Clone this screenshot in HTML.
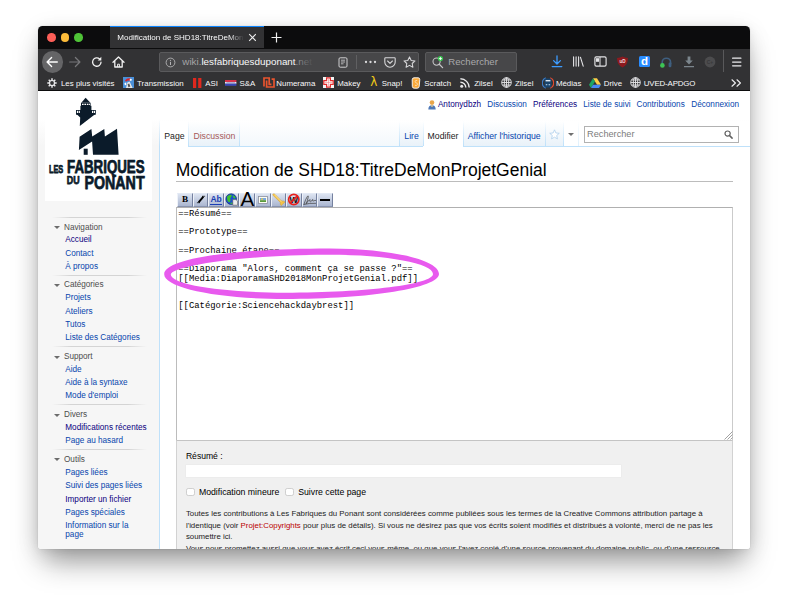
<!DOCTYPE html>
<html lang="fr"><head><meta charset="utf-8"><title>Modification de SHD18:TitreDeMonProjetGenial</title>
<style>
*{box-sizing:border-box;margin:0;padding:0}
html,body{width:788px;height:600px;overflow:hidden;background:#fff;font-family:"Liberation Sans",sans-serif;}
#shadow{position:absolute;left:38.3px;top:26px;width:711.4px;height:523.3px;border-radius:5px 5px 4px 4px;box-shadow:0 18px 28px -6px rgba(0,0,0,.39),0 4px 24px rgba(0,0,0,.09),0 1px 10px rgba(0,0,0,.06),0 0 1px rgba(0,0,0,.28);}
#win{position:absolute;left:38.3px;top:26px;width:711.4px;height:523.3px;border-radius:4.5px 4.5px 3.5px 3.5px;overflow:hidden;background:#fff;}
#tabbar{position:absolute;left:0;top:0;width:712px;height:22.5px;z-index:2;background:#0c0c0d;}
.tl{position:absolute;top:7px;width:8.7px;height:8.7px;border-radius:50%;}
#tab{position:absolute;left:72px;top:0;width:154px;height:22px;background:#323234;border-top:1.5px solid #0a84ff;color:#f9f9fa;font-size:8.05px;line-height:21px;padding-left:7px;white-space:nowrap;overflow:hidden}
#navbar{position:absolute;left:0;top:22px;width:712px;height:26px;background:#323234;}
#bmbar{position:absolute;left:0;top:48px;width:712px;height:17px;background:#323234;border-bottom:1px solid #0c0c0d;color:#f9f9fa;font-size:7.9px;line-height:17px;white-space:nowrap}
.bm{position:absolute;top:1px}
.abs{position:absolute}
#urlbar{position:absolute;left:121px;top:4px;width:260px;height:20px;background:#474749;border:1px solid #5a5a5c;border-radius:2px}
#searchbar{position:absolute;left:387px;top:4px;width:92px;height:20px;background:#474749;border:1px solid #5a5a5c;border-radius:2px}
#page{position:absolute;left:0;top:65px;width:712px;height:460px;background:#f6f6f6;overflow:hidden}
#pagebase{position:absolute;left:0;top:0;width:712px;height:55px;background:linear-gradient(#fff 50%,#f6f6f6 100%)}
#content{position:absolute;left:121px;top:55px;width:600px;height:420px;background:#fff;border:1px solid #bfe1fa;}
a{text-decoration:none;color:#0645ad}
a.v{color:#0b0080}
#ptools{position:absolute;top:7.5px;left:0;width:712px;font-size:8.18px;line-height:12px;white-space:nowrap}
#ptools a{position:absolute;top:0}
.tabs{position:absolute;top:31px;height:25px;font-size:8.7px;white-space:nowrap}
.tab{position:absolute;top:0;height:25px;line-height:12px;padding-top:10px;text-align:center;background:linear-gradient(#fff 0%,#e8f2f8 100%);border-left:1px solid #bfe1fa;color:#0645ad}
.tab.sel{background:#fff;color:#222;height:26px}
.tab.last{border-right:1px solid #bfe1fa}
h1{position:absolute;left:137.5px;top:65.7px;width:557.5px;height:25px;font-weight:normal;font-size:17.5px;line-height:26.4px;color:#000;border-bottom:1px solid #bcbcbc;white-space:nowrap}
.ph{position:absolute;left:25.7px;font-size:8.18px;color:#4d4d4d;line-height:10px}
.ph:before{content:"";position:absolute;left:-10.2px;top:3.8px;border:3.3px solid transparent;border-top:3.7px solid #6c6c6c;border-bottom:0;width:0;height:0}
.pl{position:absolute;left:27px;font-size:8.18px;line-height:9.2px;white-space:nowrap}
.sep{position:absolute;left:14px;width:95px;height:1px;background:linear-gradient(90deg,rgba(200,200,200,0),#d4d4d4 20%,#d4d4d4 80%,rgba(200,200,200,0))}
#ta{position:absolute;left:138px;top:116px;width:556.8px;height:234px;border:1px solid #cbcbcb;border-top-color:#b0b0b0;border-left-color:#bcbcbc;border-bottom-color:#c4c4c4;background:#fff;font-family:"Liberation Mono",monospace;font-size:8.88px;line-height:9.25px;color:#000;white-space:pre;padding:1.8px 1px;overflow:hidden}
#opts{position:absolute;left:138px;top:349px;width:556.4px;height:120px;background:#f0f0f0;border:1px solid #d2d2d2;border-top-color:#c4c4c4;}
#opts .t{position:absolute;white-space:nowrap;color:#000}
.cb{position:absolute;width:8.6px;height:8.4px;border:1px solid #cfcfcf;border-radius:2.2px;background:#fff}
.vsep{top:30px;width:1px;height:25px;background:linear-gradient(rgba(191,225,250,0),#bfe1fa)}
.tt{top:38.5px;font-size:8.7px;line-height:12px;color:#0645ad;white-space:nowrap}
#tb{position:absolute;left:139px;top:101.6px;width:156px;height:14.6px}
#tb .b{position:absolute;top:0;width:15.55px;height:14.6px;border:1px solid;border-color:#e3e9f4 #75819f #8792ae #eef2f9;background:linear-gradient(#dde4f1,#aab6d0);display:flex;align-items:center;justify-content:center;overflow:visible}
</style></head><body>
<div id="shadow"></div>
<div id="win">
 <div id="tabbar">
  <div class="tl" style="left:8.7px;background:#fd5f58"></div>
  <div class="tl" style="left:22.4px;background:#fdbc3a"></div>
  <div class="tl" style="left:36.1px;background:#4fc337"></div>
  <div id="tab"><div style="width:127px;overflow:hidden;-webkit-mask-image:linear-gradient(90deg,#000 88%,transparent);mask-image:linear-gradient(90deg,#000 88%,transparent)">Modification de SHD18:TitreDeMonProjetGenial</div></div>
  <svg class="abs" style="left:210px;top:7px" width="9" height="9" viewBox="0 0 9 9"><path d="M1.2 1.2L7.8 7.8M7.8 1.2L1.2 7.8" stroke="#f0f0f0" stroke-width="1.1" fill="none"/></svg>
  <svg class="abs" style="left:233px;top:6px" width="11" height="11" viewBox="0 0 11 11"><path d="M5.5 0.5V10.5M0.5 5.5H10.5" stroke="#f0f0f0" stroke-width="1.2" fill="none"/></svg>
 </div>
 <div id="navbar"><!--NAV0-->
  <div class="abs" style="left:3.3px;top:3.4px;width:21.6px;height:21.6px;border-radius:50%;background:#656567"></div>
  <svg class="abs" style="left:8px;top:8px" width="12" height="12" viewBox="0 0 12 12"><path d="M11.3 6H1.3M5.6 1.5L1.1 6L5.6 10.5" stroke="#fff" stroke-width="1.35" fill="none" stroke-linecap="round" stroke-linejoin="round"/></svg>
  <svg class="abs" style="left:30.5px;top:8px" width="12" height="12" viewBox="0 0 12 12"><path d="M0.7 6H10.7M6.4 1.5L10.9 6L6.4 10.5" stroke="#77777a" stroke-width="1.2" fill="none" stroke-linecap="round" stroke-linejoin="round"/></svg>
  <svg class="abs" style="left:53px;top:8px" width="12" height="12" viewBox="0 0 12 12"><path d="M10 6.2A4.2 4.2 0 1 1 8.6 2.9" stroke="#f0f0f0" stroke-width="1.3" fill="none" stroke-linecap="round"/><path d="M10.3 0.8V4.4H6.7Z" fill="#f0f0f0"/></svg>
  <svg class="abs" style="left:74px;top:8px" width="13" height="12" viewBox="0 0 13 12"><path d="M1 6.3L6.5 1L12 6.3M2.8 5.2V11H10.2V5.2" stroke="#f0f0f0" stroke-width="1.3" fill="none" stroke-linejoin="round" stroke-linecap="round"/><path d="M5.6 11V8.2H7.4V11" stroke="#f0f0f0" stroke-width="1" fill="none"/></svg>
  <div id="urlbar">
   <svg class="abs" style="left:5px;top:3.5px" width="11" height="11" viewBox="0 0 11 11"><circle cx="5.5" cy="5.5" r="4.4" stroke="#b4b4b6" stroke-width="0.9" fill="none"/><path d="M5.5 4.8V8" stroke="#b4b4b6" stroke-width="1"/><circle cx="5.5" cy="3.3" r="0.65" fill="#b4b4b6"/></svg>
   <div class="abs" style="left:22px;top:0;height:18px;line-height:18px;font-size:9.85px;color:#a4a4a6;white-space:nowrap">wiki.<span style="color:#f9f9fa">lesfabriquesduponant</span>.net</div>
   <div class="abs" style="left:134px;top:1px;width:22px;height:16px;background:linear-gradient(90deg,rgba(71,71,73,0),#474749 90%)"></div>
   <svg class="abs" style="left:178px;top:4px" width="10" height="11" viewBox="0 0 10 11"><rect x="1" y="0.8" width="8" height="9.4" rx="1.2" stroke="#d0d0d2" stroke-width="1" fill="none"/><path d="M3 3.2H7M3 5H7M3 6.8H5.5" stroke="#d0d0d2" stroke-width="0.8"/></svg>
   <div class="abs" style="left:196px;top:2px;width:1px;height:14px;background:#606062"></div>
   <svg class="abs" style="left:204px;top:7px" width="13" height="4" viewBox="0 0 13 4"><circle cx="2" cy="2" r="1.15" fill="#d8d8da"/><circle cx="6.5" cy="2" r="1.15" fill="#d8d8da"/><circle cx="11" cy="2" r="1.15" fill="#d8d8da"/></svg>
   <svg class="abs" style="left:224px;top:4px" width="12" height="11" viewBox="0 0 12 11"><path d="M1.6 0.8H10.4Q11.2 0.8 11.2 1.6V5A5.2 5.2 0 0 1 0.8 5V1.6Q0.8 0.8 1.6 0.8Z" stroke="#d8d8da" stroke-width="1.1" fill="none"/><path d="M3.6 4L6 6.3L8.4 4" stroke="#d8d8da" stroke-width="1.1" fill="none" stroke-linecap="round" stroke-linejoin="round"/></svg>
   <svg class="abs" style="left:243px;top:3px" width="13" height="12" viewBox="0 0 13 12"><path d="M6.5 0.9L8.2 4.4L12 4.9L9.2 7.5L9.9 11.2L6.5 9.4L3.1 11.2L3.8 7.5L1 4.9L4.8 4.4Z" stroke="#d8d8da" stroke-width="1.05" fill="none" stroke-linejoin="round"/></svg>
  </div>
  <div id="searchbar">
   <svg class="abs" style="left:5px;top:2px" width="14" height="14" viewBox="0 0 14 14"><circle cx="5.6" cy="6.6" r="3.6" stroke="#c4c4c6" stroke-width="1.1" fill="none"/><path d="M8.3 9.3L11.6 12.6" stroke="#c4c4c6" stroke-width="1.3" stroke-linecap="round"/><circle cx="9.4" cy="3.6" r="2.6" fill="#38c750"/><path d="M9.4 2.1V5.1M7.9 3.6H10.9" stroke="#fff" stroke-width="0.9"/></svg>
   <div class="abs" style="left:22px;top:0;height:18px;line-height:18px;font-size:9.6px;color:#a9a9ab;white-space:nowrap">Rechercher</div>
  </div>
  <svg class="abs" style="left:513px;top:7px" width="12" height="13" viewBox="0 0 12 13"><path d="M6 0.8V8.6M2.6 5.6L6 9L9.4 5.6" stroke="#3d9bfd" stroke-width="1.3" fill="none" stroke-linecap="round" stroke-linejoin="round"/><path d="M1.2 11.6H10.8" stroke="#3d9bfd" stroke-width="1.3" stroke-linecap="round"/></svg>
  <svg class="abs" style="left:534px;top:8px" width="13" height="11" viewBox="0 0 13 11"><path d="M1.6 0.9V10.1M4.1 0.9V10.1M6.6 0.9V10.1M8.5 1.3L11.2 10.1" stroke="#e4e4e6" stroke-width="1.1" fill="none" stroke-linecap="round"/></svg>
  <svg class="abs" style="left:556px;top:8px" width="13" height="11" viewBox="0 0 13 11"><rect x="0.9" y="0.9" width="11.2" height="9.2" rx="1.4" stroke="#e4e4e6" stroke-width="1.15" fill="none"/><path d="M6 1V10" stroke="#e4e4e6" stroke-width="1"/><rect x="2" y="2.2" width="3" height="3.6" fill="#e4e4e6"/></svg>
  <svg class="abs" style="left:578px;top:7.5px" width="13" height="12" viewBox="0 0 13 12"><path d="M6.5 0.6Q9 2 12 2Q12.2 8.6 6.5 11.6Q0.8 8.6 1 2Q4 2 6.5 0.6Z" fill="#8c1a1f"/><text x="6.5" y="7.3" font-family="Liberation Sans, sans-serif" font-size="4.6" font-weight="bold" fill="#f4dcdc" text-anchor="middle">uD</text></svg>
  <svg class="abs" style="left:600.5px;top:8px" width="11" height="11" viewBox="0 0 11 11"><rect width="11" height="11" rx="1.5" fill="#2a8cff"/><text x="5.4" y="9.2" font-family="Liberation Sans, sans-serif" font-weight="bold" font-size="11.5" fill="#fff" text-anchor="middle">d</text></svg>
  <svg class="abs" style="left:621px;top:7px" width="14" height="14" viewBox="0 0 14 14"><path d="M3.2 9.6V7.4A4.2 4.2 0 0 1 11.6 7.4V9.2" stroke="#3f5f80" stroke-width="1.6" fill="none"/><rect x="9.6" y="7.6" width="2.8" height="4.6" rx="1.2" fill="#3f5f80"/><circle cx="3.4" cy="10.4" r="2.3" fill="#3dc454"/></svg>
  <svg class="abs" style="left:644.5px;top:8px" width="12" height="12" viewBox="0 0 12 12"><path d="M4.6 0.6H7.4V4.4H9.8L6 8.4L2.2 4.4H4.6Z" fill="#7b858c"/><path d="M1 10.6H11" stroke="#7b858c" stroke-width="1.2"/></svg>
  <svg class="abs" style="left:666px;top:8px" width="12" height="12" viewBox="0 0 12 12"><circle cx="6" cy="6" r="5.4" fill="#4c4c4e"/><text x="6" y="7.8" font-family="Liberation Sans, sans-serif" font-size="5" font-weight="bold" fill="#39393b" text-anchor="middle">C+</text></svg>
  <div class="abs" style="left:685px;top:2px;width:1px;height:22px;background:#59595b"></div>
  <svg class="abs" style="left:693px;top:9px" width="11" height="10" viewBox="0 0 11 10"><path d="M1.6 1.2H9.9M1.6 5H9.9M1.6 8.8H9.9" stroke="#ececee" stroke-width="1.25" stroke-linecap="round"/></svg>
<!--NAV1--></div>
 <div id="bmbar"><!--BM0-->
  <svg class="abs" style="left:9px;top:3.5px" width="10" height="10" viewBox="0 0 10 10"><g stroke="#e8e8ea" stroke-width="1.5"><path d="M5 0.3V9.7M0.3 5H9.7M1.7 1.7L8.3 8.3M8.3 1.7L1.7 8.3"/></g><circle cx="5" cy="5" r="3.1" fill="#e8e8ea"/><circle cx="5" cy="5" r="1.9" fill="#323234"/></svg>
  <span class="bm" style="left:22.7px">Les plus visités</span>
  <svg class="abs" style="left:85px;top:3.2px" width="11" height="11" viewBox="0 0 11 11"><rect width="11" height="11" fill="#4a90d9"/><path d="M2 3.2Q4.5 0.6 7.8 1.6L7 3.8Q4.6 3 3 4.8Z" fill="#d8262c"/><path d="M7 1.6L9 2.4L8.2 4L6.6 3.4Z" fill="#fff"/><path d="M3 11L4.4 5.6L6.6 4.6L9.6 11Z" fill="#e6e6e6"/><path d="M4.6 7.2L6.2 6.4L7.4 9.4L5.4 10.2Z" fill="#555"/><path d="M1.5 6L3.2 5.6L3.4 8L1.8 8.2Z" fill="#fff"/></svg>
  <span class="bm" style="left:98.8px">Transmission</span>
  <svg class="abs" style="left:154.6px;top:3.5px" width="9" height="10" viewBox="0 0 9 10"><rect x="0" y="0" width="3.2" height="10" fill="#e0281e"/><rect x="5.2" y="0" width="3.2" height="10" fill="#e0281e"/></svg>
  <span class="bm" style="left:167px">ASI</span>
  <svg class="abs" style="left:187px;top:5.8px" width="11.4" height="5.8" viewBox="0 0 12 7" preserveAspectRatio="none"><rect width="12" height="2.4" fill="#d8324a"/><rect y="2.4" width="12" height="2.2" fill="#e8e8f4"/><rect y="4.4" width="12" height="2.6" fill="#3a48b8"/><rect x="1.5" y="3" width="9" height="1" fill="#7a7ab0"/></svg>
  <span class="bm" style="left:201.3px">S&amp;A</span>
  <svg class="abs" style="left:224.5px;top:3.2px" width="12" height="11" viewBox="0 0 12 11"><path d="M1 9.5V1H6.2V7.4H8.4" stroke="#e8542e" stroke-width="1.7" fill="none"/><path d="M3.6 3.4V10H11V2.2H8.6" stroke="#e8542e" stroke-width="1.7" fill="none"/></svg>
  <span class="bm" style="left:238px">Numerama</span>
  <svg class="abs" style="left:285px;top:3.2px" width="11" height="11" viewBox="0 0 11 11"><rect width="11" height="11" fill="#f4f4f4"/><path d="M3.6 0.8H7.4V3.6H10.2V7.4H7.4V10.2H3.6V7.4H0.8V3.6H3.6Z" fill="#fff" stroke="#e02a2a" stroke-width="1.2"/><path d="M5.5 1.5V9.5M1.5 5.5H9.5" stroke="#e88" stroke-width="0.6"/></svg>
  <span class="bm" style="left:299px">Makey</span>
  <span class="bm" style="left:332px;top:0;font-size:12px;color:#f0c818;font-family:'DejaVu Sans','Liberation Sans',sans-serif;line-height:16px">λ</span>
  <span class="bm" style="left:343.5px">Snap!</span>
  <svg class="abs" style="left:372.5px;top:2.6px" width="10" height="12" viewBox="0 0 10 12"><path d="M3 0.8H7.2Q8.8 0.8 8.8 2.6L8.2 9.4Q8 11.2 6.2 11.2H3.2Q1.4 11.2 1.3 9.4L1.2 2.8Q1.2 0.8 3 0.8Z" fill="#f8a83a" stroke="#fff" stroke-width="0.9"/><path d="M6.2 3.4Q4.2 3 4.2 4.6Q4.2 5.6 5.4 5.9Q6.6 6.3 6.4 7.5Q6.2 8.8 4 8.4" stroke="#fde6c2" stroke-width="0.8" fill="none"/></svg>
  <span class="bm" style="left:386px">Scratch</span>
  <svg class="abs" style="left:422px;top:3.6px" width="10" height="10" viewBox="0 0 10 10"><circle cx="1.7" cy="8.3" r="1.5" fill="#e8e8ea"/><path d="M0.4 4.2A5.4 5.4 0 0 1 5.8 9.6M0.4 0.8A8.8 8.8 0 0 1 9.2 9.6" stroke="#e8e8ea" stroke-width="1.4" fill="none"/></svg>
  <span class="bm" style="left:436px">Zilsel</span>
  <svg class="abs" style="left:462.5px;top:3.2px" width="11" height="11" viewBox="0 0 11 11"><g stroke="#e8e8ea" stroke-width="0.9" fill="none"><circle cx="5.5" cy="5.5" r="4.8"/><ellipse cx="5.5" cy="5.5" rx="2.2" ry="4.8"/><path d="M0.7 5.5H10.3M1.4 3H9.6M1.4 8H9.6M5.5 0.7V10.3"/></g></svg>
  <span class="bm" style="left:476.7px">Zilsel</span>
  <svg class="abs" style="left:503.3px;top:2.8px" width="12" height="12" viewBox="0 0 12 12"><path d="M3.8 0.8A5.6 5.6 0 0 0 3.8 11.2" stroke="#3a7cc8" stroke-width="1.3" fill="none"/><path d="M8.2 0.8A5.6 5.6 0 0 1 8.2 11.2" stroke="#e04a2e" stroke-width="1.3" fill="none"/><rect x="2.6" y="1.6" width="6.8" height="8.8" rx="1" fill="#18456e"/><rect x="3.6" y="3" width="4.8" height="1.4" fill="#dfe8f0"/><rect x="3.8" y="7" width="1.5" height="1.3" fill="#9fb8d0"/><rect x="6.6" y="7" width="1.5" height="1.3" fill="#9fb8d0"/></svg>
  <span class="bm" style="left:517.6px">Médias</span>
  <svg class="abs" style="left:551px;top:3.6px" width="12" height="10" viewBox="0 0 12 10"><path d="M4 0.2H8L12 6.8H8Z" fill="#fccd48"/><path d="M4 0.2L6 3.5L2 10L0 6.8Z" fill="#1da462"/><path d="M4 6.8H12L10 10H2Z" fill="#4688f4"/></svg>
  <span class="bm" style="left:565.4px">Drive</span>
  <svg class="abs" style="left:591.4px;top:3.2px" width="11" height="11" viewBox="0 0 11 11"><g stroke="#e8e8ea" stroke-width="0.9" fill="none"><circle cx="5.5" cy="5.5" r="4.8"/><ellipse cx="5.5" cy="5.5" rx="2.2" ry="4.8"/><path d="M0.7 5.5H10.3M1.4 3H9.6M1.4 8H9.6M5.5 0.7V10.3"/></g></svg>
  <span class="bm" style="left:605.5px;letter-spacing:-.15px">UVED-APDGO</span>
  <svg class="abs" style="left:693px;top:4.8px" width="11" height="8" viewBox="0 0 11 8"><path d="M1 0.8L4.4 4L1 7.2M6 0.8L9.4 4L6 7.2" stroke="#ececee" stroke-width="1.2" fill="none" stroke-linecap="round" stroke-linejoin="round"/></svg>
<!--BM1--></div>
 <div id="page">
  <div id="pagebase"></div>
  <!--PAGE0-->
  <!-- logo -->
  <div class="abs" style="left:7px;top:2px;width:107px;height:108px;background:#fff"></div>
  <svg class="abs" style="left:0;top:0" width="121" height="115" viewBox="38 91 121 115">
   <g fill="#0b1b2a">
    <path d="M85.6 97.7L90.4 102.8H81.3Z"/>
    <rect x="81" y="102.8" width="9.6" height="3.2"/>
    <rect x="80.4" y="105.8" width="11" height="5"/>
    <rect x="76" y="110" width="19.8" height="4.7"/>
    <path d="M76.5 114H95.4L79.8 125.9L80.2 117.4Z"/>
    <path d="M79.6 136.7L91.4 129L92.2 136.4L104.3 129L104.9 136.4L117 128.7L118.6 154.8H93L92.1 141.5L78.9 149.9Z"/>
    <rect x="83.7" y="148.7" width="4" height="6.1"/>
   </g>
   <g fill="#fff">
    <rect x="82" y="103.7" width="1.6" height="1.3"/><rect x="84.4" y="103.7" width="1.6" height="1.3"/><rect x="86.8" y="103.7" width="1.6" height="1.3"/><rect x="88.9" y="103.7" width="1" height="1.3"/>
    <rect x="76.9" y="110.8" width="1.3" height="2.2"/><rect x="78.8" y="110.8" width="1.1" height="2.2"/>
    <rect x="92" y="110.8" width="1.1" height="2.2"/><rect x="93.7" y="110.8" width="1.3" height="2.2"/>
   </g>
   <g fill="#0b1b2a" stroke="#0b1b2a" stroke-width="0.75" stroke-linejoin="round" font-family="Liberation Sans, sans-serif" font-weight="bold">
    <text x="48.9" y="172.9" font-size="11.7" textLength="14.4" lengthAdjust="spacingAndGlyphs">LES</text>
    <text x="67" y="172.9" font-size="18.1" textLength="77.6" lengthAdjust="spacingAndGlyphs">FABRIQUES</text>
    <text x="66.8" y="184.4" font-size="11.3" textLength="12.8" lengthAdjust="spacingAndGlyphs">DU</text>
    <text x="84.5" y="188.9" font-size="18.5" textLength="60.1" lengthAdjust="spacingAndGlyphs">PONANT</text>
   </g>
  </svg>
  <!-- sidebar -->
  <div class="sep" style="top:126px"></div>
  <div class="ph" style="top:131.7px">Navigation</div>
  <a class="pl v" style="top:144.3px">Accueil</a>
  <a class="pl" style="top:157.5px">Contact</a>
  <a class="pl" style="top:170.7px">À propos</a>
  <div class="sep" style="top:183.6px"></div>
  <div class="ph" style="top:189.4px">Catégories</div>
  <a class="pl" style="top:202.4px">Projets</a>
  <a class="pl" style="top:215.6px">Ateliers</a>
  <a class="pl" style="top:228.8px">Tutos</a>
  <a class="pl" style="top:242.0px">Liste des Catégories</a>
  <div class="sep" style="top:255.1px"></div>
  <div class="ph" style="top:260.8px">Support</div>
  <a class="pl" style="top:273.9px">Aide</a>
  <a class="pl" style="top:287.1px">Aide à la syntaxe</a>
  <a class="pl" style="top:300.3px">Mode d'emploi</a>
  <div class="sep" style="top:313.2px"></div>
  <div class="ph" style="top:319.0px">Divers</div>
  <a class="pl v" style="top:332.1px">Modifications récentes</a>
  <a class="pl" style="top:345.3px">Page au hasard</a>
  <div class="sep" style="top:357.9px"></div>
  <div class="ph" style="top:363.6px">Outils</div>
  <a class="pl" style="top:377.2px">Pages liées</a>
  <a class="pl" style="top:390.4px">Suivi des pages liées</a>
  <a class="pl v" style="top:403.6px">Importer un fichier</a>
  <a class="pl" style="top:416.8px">Pages spéciales</a>
  <a class="pl" style="top:430.0px">Information sur la<br>page</a>
  <!-- personal tools -->
  <div id="ptools">
   <svg class="abs" style="left:389.4px;top:1px" width="8" height="10" viewBox="0 0 8 10"><circle cx="4" cy="2.6" r="2.3" fill="#e9a64a"/><path d="M0.3 9.6Q0.3 5.2 4 5.2Q7.7 5.2 7.7 9.6Z" fill="#4f79b8"/><path d="M2.6 5.4L4 7.2L5.4 5.4Z" fill="#f2d28c"/></svg>
   <a class="v" style="left:399.6px">Antonydbzh</a>
   <a style="left:449px">Discussion</a>
   <a class="v" style="left:494.7px">Préférences</a>
   <a style="left:545px">Liste de suivi</a>
   <a style="left:598.3px">Contributions</a>
   <a style="left:653px">Déconnexion</a>
  </div>
  <!-- content -->
  <div id="content"></div>
  <div class="abs" style="left:121px;top:28px;width:1px;height:28px;background:linear-gradient(rgba(191,225,250,0),#bfe1fa)"></div>
  <div class="abs" style="left:122px;top:30px;width:590px;height:25px;background:linear-gradient(#fff 0%,#f3f8fc 100%)"></div>
  <div class="abs" style="left:151px;top:30px;width:50px;height:25px;background:linear-gradient(#fff 0%,#e9f2f9 100%)"></div>
  <div class="abs" style="left:362px;top:30px;width:23px;height:25px;background:linear-gradient(#fff 0%,#e9f2f9 100%)"></div>
  <div class="abs" style="left:425px;top:30px;width:100px;height:25px;background:linear-gradient(#fff 0%,#e9f2f9 100%)"></div>
  <div class="abs" style="left:122px;top:30px;width:28px;height:26px;background:#fff"></div>
  <div class="abs" style="left:385px;top:30px;width:40px;height:26px;background:#fff"></div>
  <div class="abs" style="left:526px;top:30px;width:186px;height:25px;background:#fff"></div>
  <div class="abs vsep" style="left:150px"></div><div class="abs vsep" style="left:201px"></div>
  <div class="abs vsep" style="left:361px"></div><div class="abs vsep" style="left:384.5px"></div><div class="abs vsep" style="left:424.5px"></div><div class="abs vsep" style="left:506.5px"></div><div class="abs vsep" style="left:525px"></div>
  <div class="abs tt" style="left:126px;color:#222">Page</div>
  <div class="abs tt" style="left:155.1px;color:#a55858">Discussion</div>
  <div class="abs tt" style="left:366px">Lire</div>
  <div class="abs tt" style="left:389.3px;color:#222">Modifier</div>
  <div class="abs tt" style="left:429.4px">Afficher l'historique</div>
  <svg class="abs" style="left:510.6px;top:38.2px" width="11" height="11" viewBox="0 0 12 12"><path d="M6 0.9L7.5 4.3L11.2 4.7L8.4 7.1L9.2 10.8L6 8.9L2.8 10.8L3.6 7.1L0.8 4.7L4.5 4.3Z" stroke="#a9cbea" stroke-width="0.8" fill="#fff" stroke-linejoin="round"/></svg>
  <div class="abs" style="left:529.3px;top:42.4px;border:3.2px solid transparent;border-top:3.6px solid #707070;border-bottom:0"></div>
  <div class="abs vsep" style="left:540px;opacity:.5"></div>
  <div class="abs" style="left:546.2px;top:35.2px;width:154.6px;height:16.6px;border:1px solid #b2b2b2;background:#fff"><div class="abs" style="left:1.6px;top:0;line-height:14.6px;font-size:9.18px;color:#7c7c7c">Rechercher</div>
   <svg class="abs" style="left:139px;top:3px" width="9" height="9" viewBox="0 0 9 9"><circle cx="3.6" cy="3.6" r="2.6" stroke="#606060" stroke-width="1.2" fill="none"/><path d="M5.6 5.6L8.1 8.1" stroke="#606060" stroke-width="1.5" stroke-linecap="round"/></svg></div>
  <h1>Modification de SHD18:TitreDeMonProjetGenial</h1>
  <!--TB0-->
  <div id="tb">
   <div class="b" style="left:0"><span style="font-family:'Liberation Serif',serif;font-weight:bold;font-size:9.2px;color:#000;line-height:1">B</span></div>
   <div class="b" style="left:15.55px"><svg width="10" height="9" viewBox="0 0 10 9"><path d="M2.6 7.4L7.4 1.6" stroke="#000" stroke-width="1.9"/><path d="M0.9 7.7H4M6 1.3H9.1" stroke="#000" stroke-width="0.7"/></svg></div>
   <div class="b" style="left:31.1px"><span style="font-weight:bold;font-size:8.5px;color:#1c3fb4;line-height:1;border-bottom:1.2px solid #1c3fb4;padding-bottom:0.4px;margin-top:1px">Ab</span></div>
   <div class="b" style="left:46.65px"><svg width="14" height="13" viewBox="0 0 14 13"><circle cx="6.4" cy="6.1" r="5.5" fill="#1d4fd0" stroke="#0c2a70" stroke-width="0.7"/><path d="M2.2 3.4Q4 1.2 6.6 1.5Q7.8 2.8 6.2 4Q4.8 5.4 5.8 7.2Q5.2 9.8 3.6 9.2Q1.6 7 2.2 3.4Z" fill="#3fc42c"/><path d="M8.2 2Q10.4 2.6 11 4.6Q10 6 8.8 5Q7.8 3.6 8.2 2Z" fill="#3fc42c"/><path d="M5.6 9.8Q7 9 8 10.4Q7 11.4 5.6 11Z" fill="#3fc42c"/><path d="M8 6.6H11.4L13 8.2V12.4H8Z" fill="#ececec" stroke="#555" stroke-width="0.6"/></svg></div>
   <div class="b" style="left:62.2px"><span style="font-size:20.6px;color:#000;line-height:1;margin-top:-1.6px">A</span></div>
   <div class="b" style="left:77.75px"><svg width="10" height="8" viewBox="0 0 10 8"><rect x="0.5" y="0.5" width="9" height="7" fill="#fdfdf2" stroke="#8a90a0" stroke-width="0.8"/><rect x="2" y="2" width="6" height="2.2" fill="#7aa8e0"/><rect x="2" y="4.2" width="6" height="1.8" fill="#5a9a3a"/><circle cx="4" cy="3.2" r="0.9" fill="#f0d040"/></svg></div>
   <div class="b" style="left:93.3px"><svg width="14" height="13" viewBox="0 0 14 13"><path d="M1.2 0.8Q2.2 0.2 3 1.2L9.8 8Q12 7.8 13.4 9L9.4 12.8Q8.2 11.4 8.6 9.4L1.2 2.4Q0.4 1.4 1.2 0.8Z" fill="#f4c448" stroke="#d89c24" stroke-width="0.5"/><path d="M2.4 1.4L9.6 8.8" stroke="#fbe6a0" stroke-width="0.8"/></svg></div>
   <div class="b" style="left:108.85px"><svg width="14" height="13" viewBox="0 0 14 13"><text x="7" y="10" font-family="Liberation Sans, sans-serif" font-weight="bold" font-size="9.5" text-anchor="middle" fill="#111">W</text><circle cx="7" cy="6.5" r="5.3" stroke="#e8201c" stroke-width="1.7" fill="none"/><path d="M3.3 10.3L10.7 2.7" stroke="#e8201c" stroke-width="1.7"/></svg></div>
   <div class="b" style="left:124.4px"><svg width="14" height="12" viewBox="0 0 14 12"><path d="M1 10.4Q2.6 5 4.6 2.2Q5.8 1 5.4 3.2Q4.6 7 3.2 10Q5 6.4 7.4 5.6Q6.4 8 7.8 7.8Q9.4 6.8 10 5.4Q9.6 7.6 11 7Q12.2 6.2 13.4 6.4M1 10.6Q7 9 13 9.4" stroke="#4a4a4a" stroke-width="0.8" fill="none" stroke-linecap="round"/></svg></div>
   <div class="b" style="left:139.95px"><div style="width:10.5px;height:1.8px;background:#000"></div></div>
  </div>
<!--TB1-->
  <div id="ta">==Résumé==

==Prototype==

==Prochaine étape==

==Diaporama "Alors, comment ça se passe ?"==
[[Media:DiaporamaSHD2018MonProjetGenial.pdf]]


[[Catégorie:Sciencehackdaybrest]]</div>
  <svg class="abs" style="left:685.4px;top:340px" width="9" height="9" viewBox="0 0 9 9"><path d="M8.5 0.5L0.5 8.5M8.5 3.5L3.5 8.5M8.5 6.5L6.5 8.5" stroke="#8a8a8a" stroke-width="0.8"/></svg>
  <div id="opts">
   <div class="t" style="left:8.6px;top:9.4px;font-size:8.6px;line-height:12px">Résumé :</div>
   <div class="abs" style="left:8.2px;top:22.5px;width:437px;height:14px;background:#fff;border:1px solid #ececec;border-radius:1px"></div>
   <div class="cb" style="left:8.8px;top:46.8px"></div>
   <div class="t" style="left:21.6px;top:44.7px;font-size:8.73px;line-height:12px">Modification mineure</div>
   <div class="cb" style="left:107.8px;top:46.8px"></div>
   <div class="t" style="left:120.9px;top:44.7px;font-size:8.73px;line-height:12px">Suivre cette page</div>
   <div class="t" style="left:8.6px;top:66.8px;font-size:7.85px;line-height:11.85px;color:#222;white-space:nowrap">Toutes les contributions à Les Fabriques du Ponant sont considérées comme publiées sous les termes de la Creative Commons attribution partage à<br>l'identique (voir <a style="color:#ba0000">Projet:Copyrights</a> pour plus de détails). Si vous ne désirez pas que vos écrits soient modifiés et distribués à volonté, merci de ne pas les<br>soumettre ici.<br>Vous nous promettez aussi que vous avez écrit ceci vous-même, ou que vous l'avez copié d'une source provenant du domaine public, ou d'une ressource</div>
  </div>
<!--PAGE1-->
 </div>
</div>
<svg class="abs" style="left:0;top:0;pointer-events:none" width="788" height="600" viewBox="0 0 788 600"><path fill="#e85aee" fill-rule="evenodd" d="M164.2 274.2C164.2 257.95 238.43 248.4 330 248.4C390.20 248.4 439 259.86 439 274C439 287.81 370.05 299 285 299C218.28 299 164.2 287.90 164.2 274.2ZM170.8 274.6C170.8 266.28 242.07 254.8 330 254.8C386.89 254.8 433 263.40 433 274C433 284.33 366.74 292.7 285 292.7C221.93 292.7 170.8 284.60 170.8 274.6Z"/></svg>
</body></html>
